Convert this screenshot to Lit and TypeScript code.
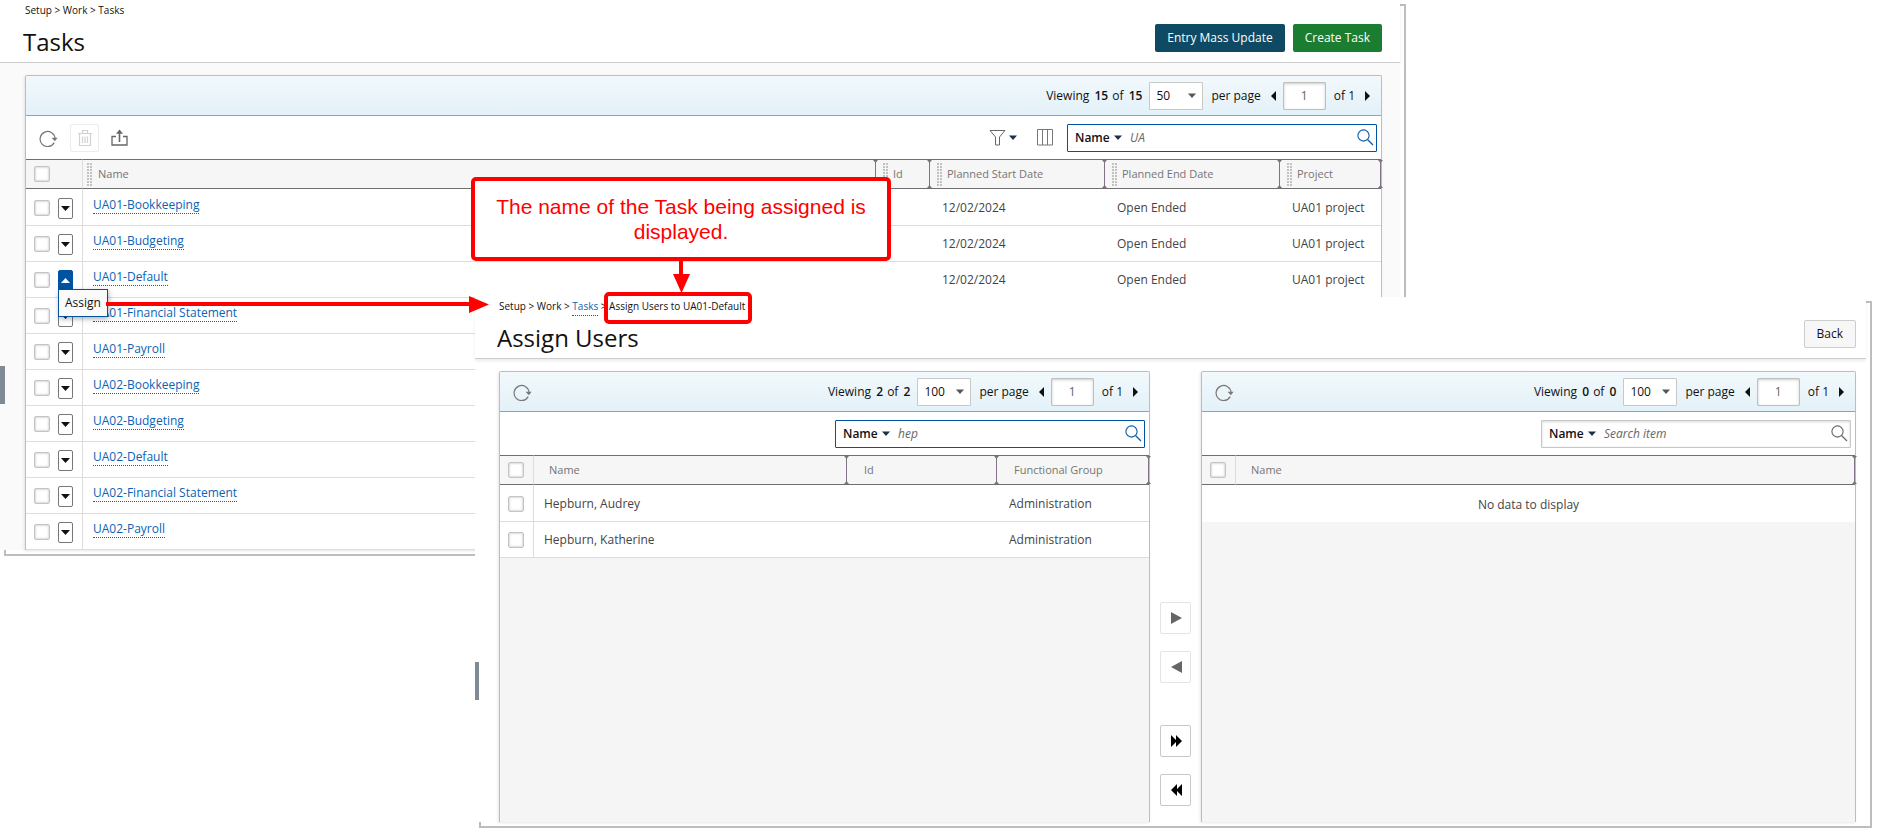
import { LitElement, html, css, svg, nothing } from "lit";
import { customElement } from "lit/decorators.js";
import { classMap } from "lit/directives/class-map.js";

interface Task {
  name: string;
  start?: string;
  end?: string;
  project?: string;
  open?: boolean;
}

const DETAILS = { start: "12/02/2024", end: "Open Ended", project: "UA01 project" };

const TASKS: Task[] = [
  { name: "UA01-Bookkeeping", ...DETAILS },
  { name: "UA01-Budgeting", ...DETAILS },
  { name: "UA01-Default", ...DETAILS, open: true },
  { name: "UA01-Financial Statement" },
  { name: "UA01-Payroll" },
  { name: "UA02-Bookkeeping" },
  { name: "UA02-Budgeting" },
  { name: "UA02-Default" },
  { name: "UA02-Financial Statement" },
  { name: "UA02-Payroll" },
];

const USERS = [
  { name: "Hepburn, Audrey", group: "Administration" },
  { name: "Hepburn, Katherine", group: "Administration" },
];

const icon = (w: number, h: number, body: unknown) =>
  html`<svg class="icon" width=${w} height=${h} viewBox="0 0 ${w} ${h}" aria-hidden="true">${body}</svg>`;

const refreshIcon = () =>
  icon(19, 18, svg`
    <path d="M15.2 13.6A7.5 7.5 0 1 1 16.100 9.600" fill="none" stroke="#777" stroke-width="1.2"/>
    <path d="M12.6 8.800h6l-2.700 3.400z" fill="#777"/>`);

const trashIcon = () =>
  icon(16, 18, svg`
    <path d="M1 4.5h14M5.5 4V1.5h5V4M2.5 5v11.5h11V5M5.5 7.5v6.5M8 7.5v6.5M10.500 7.5v6.500" fill="none" stroke="#d2d2d2" stroke-width="1.2"/>`);

const exportIcon = () =>
  icon(17, 17, svg`
    <path d="M5 7.500H1v8.500h15V7.500h-4" fill="none" stroke="#666" stroke-width="1.300"/>
    <path d="M8.500 13V2" fill="none" stroke="#666" stroke-width="1.600"/>
    <path d="M5 4.800L8.500 .5 12 4.800z" fill="#666"/>`);

const filterIcon = () =>
  icon(17, 17, svg`
    <path d="M1 1.500h15L10.500 8v8h-4V8z" fill="none" stroke="#666" stroke-width="1"/>`);

const columnsIcon = () =>
  icon(17, 17, svg`
    <path d="M.5 .5h15v15.500h-15zM5.500 .5v15.500M10.500 .5v15.500" fill="none" stroke="#777" stroke-width="1"/>`);

const searchIcon = (color: string) =>
  icon(17, 17, svg`
    <circle cx="6.500" cy="6.500" r="5.600" fill="none" stroke=${color} stroke-width="1.100"/>
    <path d="M10.500 10.500L16 16" stroke=${color} stroke-width="1.300"/>`);

const caret = (color: string) => icon(8, 5, svg`<path d="M0 .5h8L4 5z" fill=${color}/>`);
const caretUp = () => icon(9, 5, svg`<path d="M0 5h9L4.500 0z" fill="#fff"/>`);
const caretDown = () => icon(9, 5, svg`<path d="M0 0h9L4.500 5z" fill="#111"/>`);
const prev = () => icon(5, 10, svg`<path d="M5 0v10L0 5z" fill="#111"/>`);
const next = () => icon(5, 10, svg`<path d="M0 0v10l5-5z" fill="#111"/>`);
const right = () => icon(11, 12, svg`<path d="M0 0v12l11-6z" fill="#666"/>`);
const left = () => icon(11, 12, svg`<path d="M11 0v12L0 6z" fill="#666"/>`);
const right2 = () => icon(11, 12, svg`<path d="M0 0l5 5V0l6 6-6 6V7l-5 5z" fill="#000"/>`);
const left2 = () => icon(11, 12, svg`<path d="M11 0L6 5V0L0 6l6 6V7l5 5z" fill="#000"/>`);

const splitter = () => html`<span class="split">${icon(5, 28, svg`
  <path d="M2.500 0v28" stroke="#85708a" stroke-width="1"/>
  <path d="M0 0h5L2.500 3zM0 28h5L2.500 25z" fill="#777"/>`)}</span>`;

const grip = () => html`<span class="grip">${icon(5, 23, svg`
  <path d="M1 0v23M4 0v23" stroke="#c2c2c2" stroke-width="2" stroke-dasharray="2 1"/>`)}</span>`;

const pager = (shown: number, total: number, size: number) => html`
  <div class="pager">
    <span class="viewing">Viewing <b>${shown}</b> of <b>${total}</b></span>
    <label class="size">
      <select aria-label="Rows per page"><option>${size}</option></select>
      ${caret("#555")}
    </label>
    <span class="per">per page</span>
    <button class="step" aria-label="Previous page">${prev()}</button>
    <input class="page" aria-label="Page" .value=${"1"} />
    <span class="total">of 1</span>
    <button class="step" aria-label="Next page">${next()}</button>
  </div>`;

const search = (value: string, active: boolean) => html`
  <div class=${classMap({ search: true, active })}>
    <label class="field">
      <select aria-label="Search field"><option>Name</option></select>
      ${caret("#1d2f4d")}
    </label>
    <input class="term" aria-label="Search" placeholder="Search item" .value=${value} />
    <button class="find" aria-label="Find">${searchIcon(active ? "#0b5aa5" : "#666")}</button>
  </div>`;

@customElement("app-root")
export class AppRoot extends LitElement {
  static styles = css`
    :host {
      display: block;
      position: relative;
      min-height: 100vh;
      background: #fff;
      overflow: hidden;
      font: 12px/16px "Open Sans", "Noto Sans", sans-serif;
      color: #111;
    }
    * { box-sizing: border-box; }
    button, input, select { font: inherit; color: inherit; margin: 0; padding: 0; border: 0; background: none; outline: none; }
    button { display: flex; align-items: center; justify-content: center; }
    select { appearance: none; }
    .icon { display: block; flex: none; }

    .window { position: absolute; isolation: isolate; display: flex; flex-direction: column; }
    .window::before { content: ""; position: absolute; z-index: -2; inset: 4px -6px -6px 4px; border: 2px solid #bdbdbd; background: #fff; }
    .window::after { content: ""; position: absolute; z-index: -1; inset: 0; background: #fff; }
    .tasks { top: 0; left: 0; right: 483px; }
    .assign { top: 297px; left: 475px; right: 17px; bottom: 17px; }

    .head { display: flex; align-items: flex-end; justify-content: space-between; height: 63px; padding: 0 18px 10px 25px; border-bottom: 1px solid #ccc; box-shadow: 0 2px 3px rgba(0, 0, 0, 0.08); }
    .assign .head { height: 62px; padding: 0 10px 10px 24px; }
    .crumbs { height: 14px; font-size: 10px; line-height: 14px; white-space: nowrap; }
    h1 { margin: 9px 0 0 -2px; font-size: 24px; line-height: 32px; font-weight: 400; }
    .titles { align-self: flex-start; padding-top: 3px; }
    .actions { display: flex; gap: 8px; }
    .assign .titles { padding-top: 2px; }
    .btn { height: 28px; padding: 0 12px; border-radius: 2px; color: #fff; background: #0e4a63; }
    .btn.create { background: #1b7d31; }
    .btn.back { color: #111; background: #f7f7f7; border: 1px solid #ccc; }
    a { color: #0b63b5; text-decoration: none; border-bottom: 1px dotted #0b63b5; display: inline-block; }
    .crumbs a { display: inline; padding-bottom: 2px; }

    .body { padding: 12px 18px 0 25px; background: #fafafa; }
    .panels { flex: 1; display: grid; grid-template-columns: 651fr 51px 655fr; padding: 12px 10px 0 24px; }
    .panel { border: 1px solid #bdbdbd; border-bottom: 0; border-radius: 2px 2px 0 0; background: #fff; box-shadow: -1px 1px 3px rgba(0, 0, 0, 0.1); }
    .panels .panel { background: #f5f5f5; }

    .bar { display: flex; align-items: center; justify-content: space-between; height: 40px; padding: 0 11px 0 13px; border-bottom: 1px solid #999fa2; background: linear-gradient(#f2f9fc, #e3f1f8); }
    .pager { display: flex; align-items: center; margin-left: auto; white-space: nowrap; }
    .pager b { font-weight: 600; margin: 0 1px 0 2px; }
    .size { display: grid; align-items: center; width: 54px; height: 28px; margin: 0 8px 0 6px; border: 1px solid #c8c8c8; background: #fff; border-radius: 1px; }
    .size select, .size .icon { grid-area: 1 / 1; }
    .size select { height: 26px; padding-left: 6px; }
    .size .icon { justify-self: end; margin-right: 6px; pointer-events: none; }
    .per { margin-right: 10px; }
    .page { width: 43px; height: 28px; margin: 0 8px 0 7px; text-align: center; color: #666; background: #fff; border: 1px solid #c0c0c0; box-shadow: inset 0 1px 3px rgba(0, 0, 0, 0.2); border-radius: 1px; }
    .total { margin-right: 10px; }

    .tools { display: flex; align-items: center; height: 43px; padding: 0 4px 0 13px; background: #fff; }
    .tools .trash { width: 29px; height: 28px; margin: 0 12px; border: 1px solid #ececec; border-radius: 2px; }
    .tools .push { margin-left: auto; }
    .tools .filter { gap: 3px; margin-right: 20px; }
    .tools .cols { margin-right: 13px; }
    .search { display: flex; align-items: center; width: 310px; height: 28px; padding: 0 2px 0 7px; background: #fff; border: 1px solid #c6c6c6; box-shadow: inset 0 1px 3px rgba(0, 0, 0, 0.15); border-radius: 1px; }
    .search.active { border-color: #0052a3; box-shadow: none; }
    .field { display: flex; align-items: center; gap: 4px; margin-right: 8px; }
    .field select { font-weight: 600; }
    .field .icon { pointer-events: none; }
    .term { flex: 1; min-width: 0; font-style: italic; color: #666; }
    .term::placeholder { color: #666; opacity: 1; }

    table { width: 100%; table-layout: fixed; border-collapse: separate; border-spacing: 0; background: #fff; }
    th { height: 30px; padding: 0 0 2px 17px; font-size: 11px; font-weight: 400; line-height: 15px; text-align: left; color: #757575; background: #f6f6f6; border-top: 1px solid #6f6f6f; border-bottom: 1px solid #6f6f6f; white-space: nowrap; position: relative; }
    td { height: 36px; padding: 1px 0 0 12px; border-bottom: 1px solid #ddd; color: #444; white-space: nowrap; }
    tbody tr:first-child td { height: 37px; padding-top: 2px; }
    th.pick, td.pick { padding-left: 8px; border-right: 1px solid #ddd; }
    th.pick { padding-bottom: 0; }
    td.pick { position: relative; }
    th.name { padding-left: 15px; }
    td.name { padding-left: 10px; }
    td.linked { padding-bottom: 5px; }
    td.none { text-align: center; padding: 0; border-bottom: 0; }
    .c57 { width: 57px; } .c34 { width: 34px; } .c54 { width: 54px; } .c101 { width: 101px; } .c175 { width: 175px; } .c150 { width: 150px; } .c152 { width: 152px; }
    .split { position: absolute; top: 0; right: -2px; z-index: 1; }
    .grip { position: absolute; top: 3px; left: 7px; }
    th.name .grip { left: 4px; }

    .controls { display: flex; align-items: center; gap: 8px; }
    .check { appearance: none; display: block; width: 16px; height: 16px; border: 1px solid #c4c4c4; border-radius: 2px; background: #fff; box-shadow: inset 0 0 2px 1px rgba(0, 0, 0, 0.14); }
    .drop { width: 15px; height: 21px; background: #fff; border: 1px solid #777; border-radius: 2px; }
    .drop.open { background: #0052a3; border-color: #0052a3; }
    .menu { position: absolute; z-index: 2; left: 32px; top: 27px; height: 28px; width: 50px; background: #fafafa; border: 1px solid #0052a3; box-shadow: 1px 2px 5px rgba(0, 0, 0, 0.3); color: #111; }

    .handle { position: absolute; left: 0; width: 5px; height: 38px; background: #808a94; }
    .tasks .handle { top: 366px; }
    .assign .handle { top: 365px; width: 4px; }

    .movers { display: flex; flex-direction: column; align-items: center; justify-content: flex-end; gap: 17px; padding-bottom: 16px; }
    .mover { width: 31px; height: 32px; padding-left: 2px; border: 1px solid #c8c8c8; border-radius: 2px; background: #fff; }
    .mover.off { border-color: #e4e4e4; }
    .gap { margin-top: 25px; }

    .note { position: absolute; left: 471px; top: 177px; width: 420px; height: 84px; display: flex; align-items: center; justify-content: center; padding: 0 18px; border: 4px solid #f00; border-radius: 5px; background: #fff; color: #f00; font: 21px/25px "Liberation Sans", Arial, sans-serif; text-align: center; }
    .ring { position: absolute; left: 604px; top: 292px; width: 148px; height: 32px; border: 4px solid #f00; border-radius: 5px; }
    .arrow-right { position: absolute; left: 106px; top: 296px; }
    .arrow-down { position: absolute; left: 673px; top: 261px; }
  `;

  private check(label: string) {
    return html`<input class="check" type="checkbox" aria-label=${label} />`;
  }

  private taskRow(t: Task) {
    return html`<tr>
      <td class="pick">
        <div class="controls">
          ${this.check(`Select ${t.name}`)}
          <button class=${classMap({ drop: true, open: !!t.open })} aria-label="Actions for ${t.name}">
            ${t.open ? caretUp() : caretDown()}
          </button>
        </div>
        ${t.open ? html`<button class="menu">Assign</button>` : nothing}
      </td>
      <td class="name linked"><a href="#">${t.name}</a></td>
      <td></td>
      <td>${t.start}</td>
      <td>${t.end}</td>
      <td>${t.project}</td>
    </tr>`;
  }

  private tasksWindow() {
    return html`<section class="window tasks">
      <header class="head">
        <div class="titles">
          <nav class="crumbs">Setup &gt; Work &gt; Tasks</nav>
          <h1>Tasks</h1>
        </div>
        <div class="actions">
          <button class="btn">Entry Mass Update</button>
          <button class="btn create">Create Task</button>
        </div>
      </header>
      <div class="body">
        <div class="panel">
          <div class="bar">${pager(15, 15, 50)}</div>
          <div class="tools">
            <button aria-label="Refresh">${refreshIcon()}</button>
            <button class="trash" aria-label="Delete" disabled>${trashIcon()}</button>
            <button aria-label="Export">${exportIcon()}</button>
            <button class="push filter" aria-label="Filter">${filterIcon()}${caret("#1d2f4d")}</button>
            <button class="cols" aria-label="Columns">${columnsIcon()}</button>
            ${search("UA", true)}
          </div>
          <table>
            <thead><tr>
              <th class="pick c57">${this.check("Select all tasks")}</th>
              <th class="name">${grip()}Name${splitter()}</th>
              <th class="c54">${grip()}Id${splitter()}</th>
              <th class="c175">${grip()}Planned Start Date${splitter()}</th>
              <th class="c175">${grip()}Planned End Date${splitter()}</th>
              <th class="c101">${grip()}Project${splitter()}</th>
            </tr></thead>
            <tbody>${TASKS.map((t) => this.taskRow(t))}</tbody>
          </table>
        </div>
      </div>
      <span class="handle"></span>
    </section>`;
  }

  private assignWindow() {
    return html`<section class="window assign">
      <header class="head">
        <div class="titles">
          <nav class="crumbs">Setup &gt; Work &gt; <a href="#">Tasks</a> &gt; Assign Users to UA01-Default</nav>
          <h1>Assign Users</h1>
        </div>
        <button class="btn back">Back</button>
      </header>
      <div class="panels">
        <div class="panel">
          <div class="bar"><button aria-label="Refresh">${refreshIcon()}</button>${pager(2, 2, 100)}</div>
          <div class="tools"><span class="push"></span>${search("hep", true)}</div>
          <table>
            <thead><tr>
              <th class="pick c34">${this.check("Select all users")}</th>
              <th class="name">Name${splitter()}</th>
              <th class="c150">Id${splitter()}</th>
              <th class="c152">Functional Group${splitter()}</th>
            </tr></thead>
            <tbody>${USERS.map((u) => html`<tr>
              <td class="pick">${this.check(`Select ${u.name}`)}</td>
              <td class="name">${u.name}</td>
              <td></td>
              <td>${u.group}</td>
            </tr>`)}</tbody>
          </table>
        </div>
        <div class="movers">
          <button class="mover off" aria-label="Assign selected">${right()}</button>
          <button class="mover off" aria-label="Remove selected">${left()}</button>
          <button class="mover gap" aria-label="Assign all">${right2()}</button>
          <button class="mover" aria-label="Remove all">${left2()}</button>
        </div>
        <div class="panel">
          <div class="bar"><button aria-label="Refresh">${refreshIcon()}</button>${pager(0, 0, 100)}</div>
          <div class="tools"><span class="push"></span>${search("", false)}</div>
          <table>
            <thead><tr>
              <th class="pick c34">${this.check("Select all assigned users")}</th>
              <th class="name">Name${splitter()}</th>
            </tr></thead>
            <tbody><tr><td class="none" colspan="2">No data to display</td></tr></tbody>
          </table>
        </div>
      </div>
      <span class="handle"></span>
    </section>`;
  }

  render() {
    return html`
      ${this.tasksWindow()}
      ${this.assignWindow()}
      <div class="note">The name of the Task being assigned is displayed.</div>
      <div class="ring"></div>
      <div class="arrow-right">${icon(383, 17, svg`<path d="M0 6h363V0l20 8.500L363 17v-7H0z" fill="#f00"/>`)}</div>
      <div class="arrow-down">${icon(17, 32, svg`<path d="M6 0h4v13h7L8.500 32 0 13h6z" fill="#f00"/>`)}</div>
    `;
  }
}
